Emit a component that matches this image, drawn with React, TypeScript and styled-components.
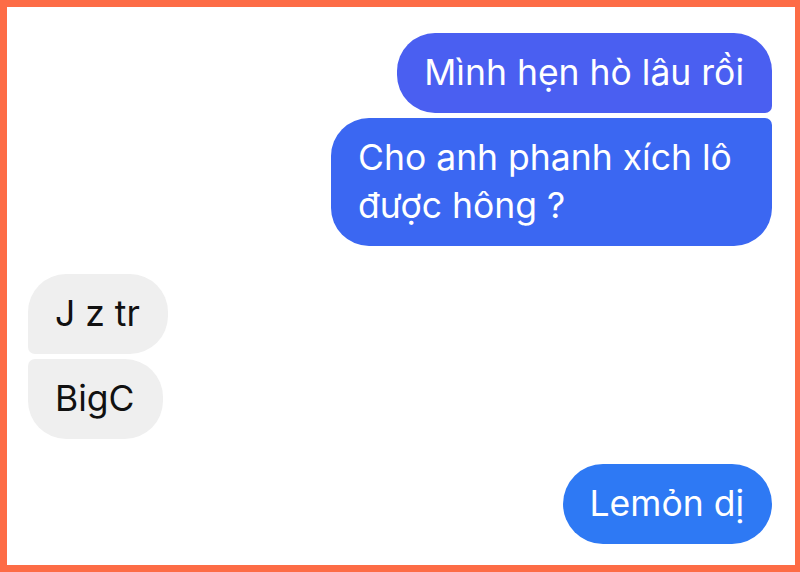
import styled, { createGlobalStyle, css } from 'styled-components'

const GlobalStyle = createGlobalStyle`
  html, body {
    margin: 0;
    padding: 0;
    background: #fd6c46;
  }
  * {
    box-sizing: border-box;
  }
`

const Frame = styled.div`
  width: 800px;
  height: 572px;
  background: #fd6c46;
  padding: 7px 5px 7px 7px;
`

const Screen = styled.div`
  width: 100%;
  height: 100%;
  background: #ffffff;
  padding: 26px 23px 0 21px;
  display: flex;
  flex-direction: column;
`

const Group = styled.div<{ $side: 'in' | 'out'; $gap?: number }>(
  ({ $side, $gap = 0 }) => css`
    display: flex;
    flex-direction: column;
    align-items: ${$side === 'out' ? 'flex-end' : 'flex-start'};
    gap: 5px;
    margin-top: ${$gap}px;
  `,
)

type Pos = 'first' | 'last' | 'single'

const R = 38
const r = 7

const radius = (side: 'in' | 'out', pos: Pos) => {
  if (pos === 'single') return `${R + 4}px`
  if (side === 'out') {
    return pos === 'first'
      ? `${R}px ${R}px ${r}px ${R}px`
      : `${R}px ${r}px ${R}px ${R}px`
  }
  return pos === 'first'
    ? `${R}px ${R}px ${R}px ${r}px`
    : `${r}px ${R}px ${R}px ${R}px`
}

const Bubble = styled.div<{ $side: 'in' | 'out'; $pos: Pos; $bg?: string }>(
  ({ $side, $pos, $bg }) => css`
    max-width: 441px;
    padding: 16px 28px 16px 27px;
    font-family: Inter, 'Liberation Sans', sans-serif;
    font-size: 35.5px;
    line-height: 48px;
    border-radius: ${radius($side, $pos)};
    background: ${$side === 'out' ? $bg : '#efefef'};
    color: ${$side === 'out' ? '#ffffff' : '#111111'};
  `,
)

export default function App() {
  return (
    <>
      <GlobalStyle />
      <Frame>
        <Screen>
          <Group $side="out">
            <Bubble $side="out" $pos="first" $bg="#4a5ff1">
              Mình hẹn hò lâu rồi
            </Bubble>
            <Bubble $side="out" $pos="last" $bg="#3b67f2">
              Cho anh phanh xích lô được hông ?
            </Bubble>
          </Group>
          <Group $side="in" $gap={28}>
            <Bubble $side="in" $pos="first">
              J z tr
            </Bubble>
            <Bubble $side="in" $pos="last">
              BigC
            </Bubble>
          </Group>
          <Group $side="out" $gap={25}>
            <Bubble $side="out" $pos="single" $bg="#2e79f4">
              Lemỏn dị
            </Bubble>
          </Group>
        </Screen>
      </Frame>
    </>
  )
}
